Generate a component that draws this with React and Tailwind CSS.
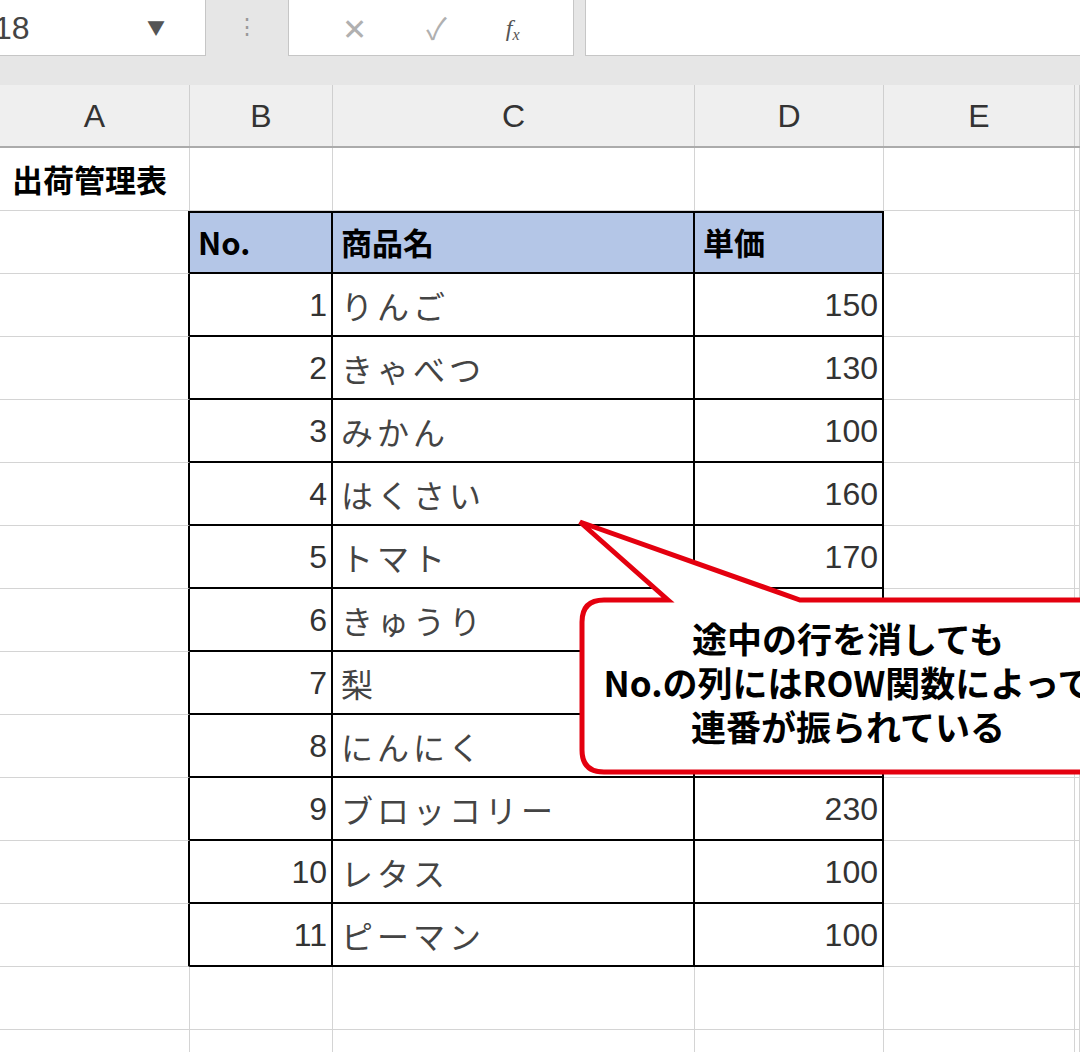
const COLS = [190, 143, 362, 189, 191, 5];
const data = [
  [1, "りんご", 150], [2, "きゃべつ", 130], [3, "みかん", 100], [4, "はくさい", 160],
  [5, "トマト", 170], [6, "きゅうり", 120], [7, "梨", 300], [8, "にんにく", 250],
  [9, "ブロッコリー", 230], [10, "レタス", 100], [11, "ピーマン", 100],
];
const F = { fontFamily: '"Noto Sans CJK JP", "Noto Sans", sans-serif' };

function Row({ children }) {
  return <div className="flex h-[63px] shrink-0">{children}</div>;
}
function Cell({ w, cls = "", children }) {
  return (
    <div style={{ width: w }} className={"shrink-0 box-border border-r border-b border-[#d4d4d4] flex items-center " + cls}>
      {children}
    </div>
  );
}

export default function App() {
  return (
    <div className="relative w-[1080px] h-[1052px] overflow-hidden bg-white" style={F}>
      <div className="h-[85px] bg-[#e6e6e6] flex items-start">
        <div className="w-[206px] h-[56px] bg-white border-b border-r border-[#c6c6c6] flex items-center justify-between pr-10">
          <span className="text-[32px] text-[#444] -ml-[6px]" style={{ fontFamily: '"Liberation Sans", sans-serif' }}>18</span>
          <span className="text-[#555] text-[18px]">▼</span>
        </div>
        <div className="w-[82px] h-[56px] flex justify-center pt-1 text-[#999] text-[22px] leading-[40px]">⋮</div>
        <div className="w-[286px] h-[56px] bg-white border-b border-x border-[#c6c6c6] flex items-center justify-around px-6 text-[#b0b0b0] text-[30px]">
          <span>✕</span><span>✓</span>
          <span className="italic text-[#555] text-[24px]" style={{ fontFamily: '"Liberation Serif", serif' }}>f<sub className="text-[16px]">x</sub></span>
        </div>
        <div className="ml-[11px] flex-1 h-[56px] bg-white border-b border-l border-[#c6c6c6]" />
      </div>
      <div className="flex h-[63px] bg-[#efefef] border-b-2 border-[#ababab]">
        {["A", "B", "C", "D", "E", ""].map((c, i) => (
          <div key={i} style={{ width: COLS[i] }} className="shrink-0 border-r border-[#cfcfcf] flex items-center justify-center text-[32px] text-[#333]" >
            <span style={{ fontFamily: '"Liberation Sans", sans-serif' }}>{c}</span>
          </div>
        ))}
      </div>
      <Row>
        <Cell w={COLS[0]} cls="pl-3 overflow-visible"><span className="text-[31px] font-bold whitespace-nowrap">出荷管理表</span></Cell>
        <Cell w={COLS[1]} /><Cell w={COLS[2]} /><Cell w={COLS[3]} /><Cell w={COLS[4]} /><Cell w={COLS[5]} />
      </Row>
      <Row>
        <Cell w={COLS[0]} cls="border-r-2 border-r-black" />
        <Cell w={COLS[1]} cls="bg-[#b4c6e7] border-t-2 border-t-black border-b-2 border-b-black border-r-2 border-r-black px-2 text-[31px] font-bold">No.</Cell>
        <Cell w={COLS[2]} cls="bg-[#b4c6e7] border-t-2 border-t-black border-b-2 border-b-black border-r-2 border-r-black px-2 text-[31px] font-bold">商品名</Cell>
        <Cell w={COLS[3]} cls="bg-[#b4c6e7] border-t-2 border-t-black border-b-2 border-b-black border-r-2 border-r-black px-2 text-[31px] font-bold">単価</Cell>
        <Cell w={COLS[4]} /><Cell w={COLS[5]} />
      </Row>
      {data.map(([n, name, p]) => (
        <Row key={n}>
          <Cell w={COLS[0]} cls="border-r-2 border-r-black" />
          <Cell w={COLS[1]} cls="border-b-2 border-b-black border-r-2 border-r-black justify-end pr-1 text-[32px] text-[#333]"><span style={{ fontFamily: '"Liberation Sans", sans-serif' }}>{n}</span></Cell>
          <Cell w={COLS[2]} cls="border-b-2 border-b-black border-r-2 border-r-black pl-2 text-[32px] text-[#444] tracking-[4px]">{name}</Cell>
          <Cell w={COLS[3]} cls="border-b-2 border-b-black border-r-2 border-r-black justify-end pr-1 text-[32px] text-[#333]"><span style={{ fontFamily: '"Liberation Sans", sans-serif' }}>{p}</span></Cell>
          <Cell w={COLS[4]} /><Cell w={COLS[5]} />
        </Row>
      ))}
      {[0, 1].map((k) => (
        <Row key={"e" + k}>
          {COLS.map((w, i) => <Cell key={i} w={w} />)}
        </Row>
      ))}
      <svg className="absolute left-0 top-0" width="1080" height="1052">
        <path d="M 668 600 L 580 522 L 800 600 L 1130 600 L 1130 772 L 604 772 Q 582 772 582 750 L 582 622 Q 582 600 604 600 Z"
          fill="white" stroke="#e4000f" strokeWidth="5" strokeLinejoin="miter" />
      </svg>
      <div className="absolute left-[548px] w-[600px] top-[616px] text-center text-[35px] font-bold leading-[44px] text-black whitespace-nowrap">
        <div>途中の行を消しても</div>
        <div>No.の列にはROW関数によって</div>
        <div>連番が振られている</div>
      </div>
    </div>
  );
}
